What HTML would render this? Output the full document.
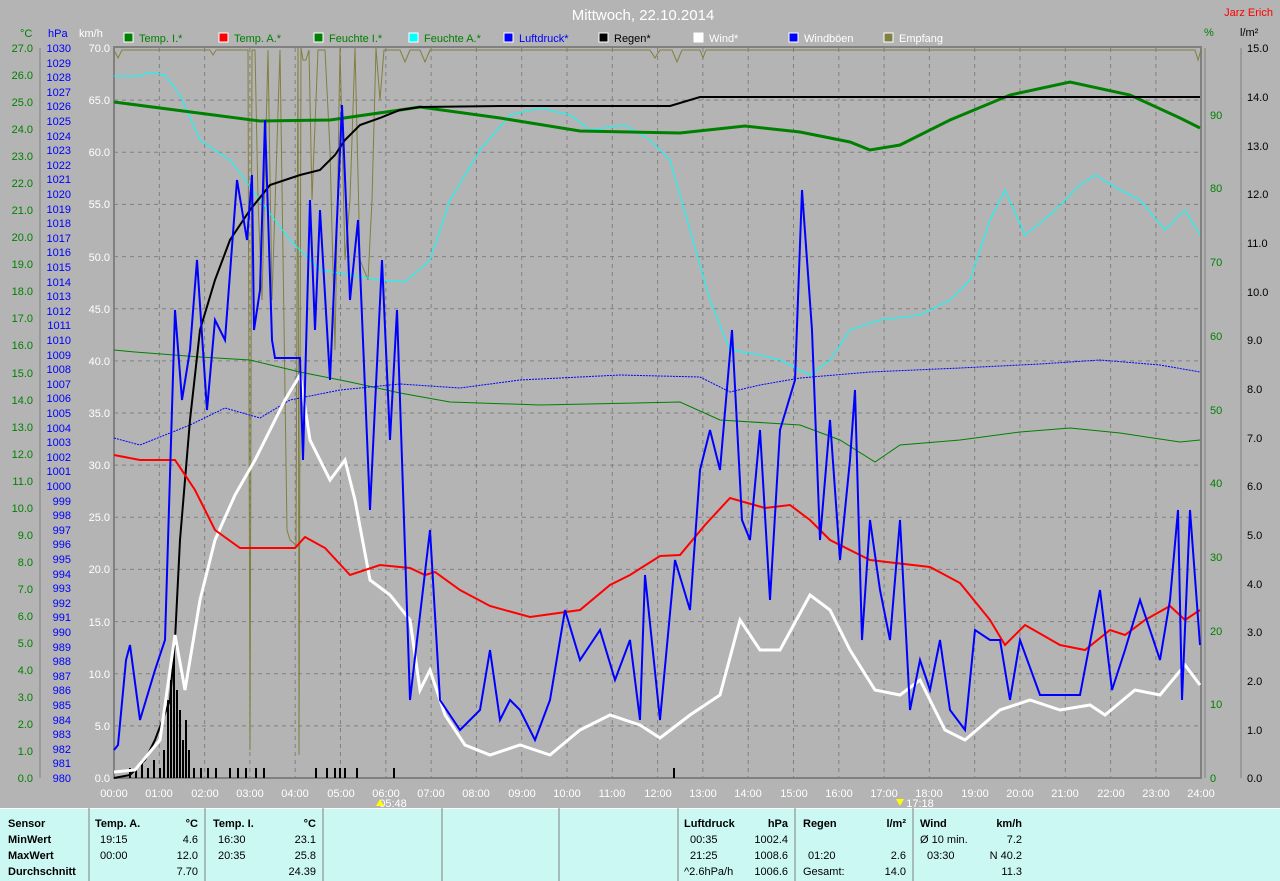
<!DOCTYPE html>
<html><head><meta charset="utf-8"><style>
html,body{margin:0;padding:0;background:#b4b4b4;}
svg{display:block;font-family:"Liberation Sans",sans-serif;}
.t{font-size:11px;}
</style></head><body>
<svg width="1280" height="881" viewBox="0 0 1280 881" xmlns="http://www.w3.org/2000/svg">
<rect width="1280" height="881" fill="#b4b4b4"/>
<text x="643" y="20" font-size="15" fill="#fff" text-anchor="middle">Mittwoch, 22.10.2014</text>
<text x="1273" y="16" font-size="11" fill="#f00" text-anchor="end">Jarz Erich</text>
<g class="t">
<rect x="124" y="33" width="9" height="9" fill="#008000" stroke="#fff"/><text x="139" y="42" fill="#008000">Temp. I.*</text>
<rect x="219" y="33" width="9" height="9" fill="#f00" stroke="#fff"/><text x="234" y="42" fill="#008000">Temp. A.*</text>
<rect x="314" y="33" width="9" height="9" fill="#008000" stroke="#fff"/><text x="329" y="42" fill="#008000">Feuchte I.*</text>
<rect x="409" y="33" width="9" height="9" fill="#0ff" stroke="#fff"/><text x="424" y="42" fill="#008000">Feuchte A.*</text>
<rect x="504" y="33" width="9" height="9" fill="#00f" stroke="#fff"/><text x="519" y="42" fill="#00f">Luftdruck*</text>
<rect x="599" y="33" width="9" height="9" fill="#000" stroke="#fff"/><text x="614" y="42" fill="#000">Regen*</text>
<rect x="694" y="33" width="9" height="9" fill="#fff" stroke="#fff"/><text x="709" y="42" fill="#fff">Wind*</text>
<rect x="789" y="33" width="9" height="9" fill="#00f" stroke="#fff"/><text x="804" y="42" fill="#fff">Windböen</text>
<rect x="884" y="33" width="9" height="9" fill="#808040" stroke="#fff"/><text x="899" y="42" fill="#fff">Empfang</text>
<text x="20" y="37" fill="#008000">°C</text><text x="48" y="37" fill="#00f">hPa</text><text x="79" y="37" fill="#fff">km/h</text>
<text x="1204" y="36" fill="#008000">%</text><text x="1240" y="36" fill="#000">l/m²</text>
</g>
<g stroke="#808080" stroke-dasharray="4,4" stroke-width="1">
<line x1="114" y1="100.1" x2="1201" y2="100.1"/><line x1="114" y1="152.3" x2="1201" y2="152.3"/><line x1="114" y1="204.4" x2="1201" y2="204.4"/><line x1="114" y1="256.6" x2="1201" y2="256.6"/><line x1="114" y1="308.7" x2="1201" y2="308.7"/><line x1="114" y1="360.9" x2="1201" y2="360.9"/><line x1="114" y1="413" x2="1201" y2="413"/><line x1="114" y1="465.1" x2="1201" y2="465.1"/><line x1="114" y1="517.3" x2="1201" y2="517.3"/><line x1="114" y1="569.4" x2="1201" y2="569.4"/><line x1="114" y1="621.6" x2="1201" y2="621.6"/><line x1="114" y1="673.7" x2="1201" y2="673.7"/><line x1="114" y1="725.9" x2="1201" y2="725.9"/>
<line x1="159.3" y1="48" x2="159.3" y2="778"/><line x1="204.6" y1="48" x2="204.6" y2="778"/><line x1="249.9" y1="48" x2="249.9" y2="778"/><line x1="295.2" y1="48" x2="295.2" y2="778"/><line x1="340.5" y1="48" x2="340.5" y2="778"/><line x1="385.8" y1="48" x2="385.8" y2="778"/><line x1="431.1" y1="48" x2="431.1" y2="778"/><line x1="476.4" y1="48" x2="476.4" y2="778"/><line x1="521.7" y1="48" x2="521.7" y2="778"/><line x1="567" y1="48" x2="567" y2="778"/><line x1="612.3" y1="48" x2="612.3" y2="778"/><line x1="657.6" y1="48" x2="657.6" y2="778"/><line x1="702.9" y1="48" x2="702.9" y2="778"/><line x1="748.2" y1="48" x2="748.2" y2="778"/><line x1="793.5" y1="48" x2="793.5" y2="778"/><line x1="838.8" y1="48" x2="838.8" y2="778"/><line x1="884.1" y1="48" x2="884.1" y2="778"/><line x1="929.4" y1="48" x2="929.4" y2="778"/><line x1="974.7" y1="48" x2="974.7" y2="778"/><line x1="1020" y1="48" x2="1020" y2="778"/><line x1="1065.3" y1="48" x2="1065.3" y2="778"/><line x1="1110.6" y1="48" x2="1110.6" y2="778"/><line x1="1155.9" y1="48" x2="1155.9" y2="778"/>
</g>
<line x1="114" y1="778" x2="1201" y2="778" stroke="#000" stroke-dasharray="1,2"/>
<rect x="114" y="47" width="1087" height="731" fill="none" stroke="#808080" stroke-width="2"/>
<g stroke="#808080"><line x1="40" y1="48" x2="40" y2="778"/><line x1="1241" y1="48" x2="1241" y2="778"/><line x1="1205" y1="48" x2="1205" y2="778"/></g>
<g class="t" fill="#008000" text-anchor="end">
<text x="33" y="52">27.0</text><text x="33" y="79">26.0</text><text x="33" y="106">25.0</text><text x="33" y="133">24.0</text><text x="33" y="160">23.0</text><text x="33" y="187">22.0</text><text x="33" y="214">21.0</text><text x="33" y="241">20.0</text><text x="33" y="268">19.0</text><text x="33" y="295">18.0</text><text x="33" y="322">17.0</text><text x="33" y="349">16.0</text><text x="33" y="377">15.0</text><text x="33" y="404">14.0</text><text x="33" y="431">13.0</text><text x="33" y="458">12.0</text><text x="33" y="485">11.0</text><text x="33" y="512">10.0</text><text x="33" y="539">9.0</text><text x="33" y="566">8.0</text><text x="33" y="593">7.0</text><text x="33" y="620">6.0</text><text x="33" y="647">5.0</text><text x="33" y="674">4.0</text><text x="33" y="701">3.0</text><text x="33" y="728">2.0</text><text x="33" y="755">1.0</text><text x="33" y="782">0.0</text>
</g>
<g class="t" fill="#00f" text-anchor="end">
<text x="71" y="52">1030</text><text x="71" y="67">1029</text><text x="71" y="81">1028</text><text x="71" y="96">1027</text><text x="71" y="110">1026</text><text x="71" y="125">1025</text><text x="71" y="140">1024</text><text x="71" y="154">1023</text><text x="71" y="169">1022</text><text x="71" y="183">1021</text><text x="71" y="198">1020</text><text x="71" y="213">1019</text><text x="71" y="227">1018</text><text x="71" y="242">1017</text><text x="71" y="256">1016</text><text x="71" y="271">1015</text><text x="71" y="286">1014</text><text x="71" y="300">1013</text><text x="71" y="315">1012</text><text x="71" y="329">1011</text><text x="71" y="344">1010</text><text x="71" y="359">1009</text><text x="71" y="373">1008</text><text x="71" y="388">1007</text><text x="71" y="402">1006</text><text x="71" y="417">1005</text><text x="71" y="432">1004</text><text x="71" y="446">1003</text><text x="71" y="461">1002</text><text x="71" y="475">1001</text><text x="71" y="490">1000</text><text x="71" y="505">999</text><text x="71" y="519">998</text><text x="71" y="534">997</text><text x="71" y="548">996</text><text x="71" y="563">995</text><text x="71" y="578">994</text><text x="71" y="592">993</text><text x="71" y="607">992</text><text x="71" y="621">991</text><text x="71" y="636">990</text><text x="71" y="651">989</text><text x="71" y="665">988</text><text x="71" y="680">987</text><text x="71" y="694">986</text><text x="71" y="709">985</text><text x="71" y="724">984</text><text x="71" y="738">983</text><text x="71" y="753">982</text><text x="71" y="767">981</text><text x="71" y="782">980</text>
</g>
<g class="t" fill="#fff" text-anchor="end">
<text x="110" y="52">70.0</text><text x="110" y="104">65.0</text><text x="110" y="156">60.0</text><text x="110" y="208">55.0</text><text x="110" y="261">50.0</text><text x="110" y="313">45.0</text><text x="110" y="365">40.0</text><text x="110" y="417">35.0</text><text x="110" y="469">30.0</text><text x="110" y="521">25.0</text><text x="110" y="573">20.0</text><text x="110" y="626">15.0</text><text x="110" y="678">10.0</text><text x="110" y="730">5.0</text><text x="110" y="782">0.0</text>
</g>
<g class="t" fill="#008000">
<text x="1210" y="119">90</text><text x="1210" y="192">80</text><text x="1210" y="266">70</text><text x="1210" y="340">60</text><text x="1210" y="414">50</text><text x="1210" y="487">40</text><text x="1210" y="561">30</text><text x="1210" y="635">20</text><text x="1210" y="708">10</text><text x="1210" y="782">0</text>
</g>
<g class="t" fill="#000">
<text x="1247" y="52">15.0</text><text x="1247" y="101">14.0</text><text x="1247" y="150">13.0</text><text x="1247" y="198">12.0</text><text x="1247" y="247">11.0</text><text x="1247" y="296">10.0</text><text x="1247" y="344">9.0</text><text x="1247" y="393">8.0</text><text x="1247" y="442">7.0</text><text x="1247" y="490">6.0</text><text x="1247" y="539">5.0</text><text x="1247" y="588">4.0</text><text x="1247" y="636">3.0</text><text x="1247" y="685">2.0</text><text x="1247" y="734">1.0</text><text x="1247" y="782">0.0</text>
</g>
<g class="t" fill="#fff" text-anchor="middle">
<text x="114" y="797">00:00</text><text x="159" y="797">01:00</text><text x="205" y="797">02:00</text><text x="250" y="797">03:00</text><text x="295" y="797">04:00</text><text x="341" y="797">05:00</text><text x="386" y="797">06:00</text><text x="431" y="797">07:00</text><text x="476" y="797">08:00</text><text x="522" y="797">09:00</text><text x="567" y="797">10:00</text><text x="612" y="797">11:00</text><text x="658" y="797">12:00</text><text x="703" y="797">13:00</text><text x="748" y="797">14:00</text><text x="794" y="797">15:00</text><text x="839" y="797">16:00</text><text x="884" y="797">17:00</text><text x="929" y="797">18:00</text><text x="975" y="797">19:00</text><text x="1020" y="797">20:00</text><text x="1065" y="797">21:00</text><text x="1111" y="797">22:00</text><text x="1156" y="797">23:00</text><text x="1201" y="797">24:00</text>
<text x="393" y="807">05:48</text><text x="920" y="807">17:18</text>
</g>
<polygon points="376,806 380,799 384,806" fill="#ff0"/><polygon points="896,799 904,799 900,806" fill="#ff0"/>
<polyline fill="none" stroke="#808040" stroke-width="1" points="114,50 118,58 122,50 210,50 213,55 216,50 248,50 250,750 252,50 255,50 258,200 262,300 268,50 272,300 280,50 287,530 290,540 296,545 298,48 299,755 301,48 303,60 306,60 309,50 312,200 318,50 325,50 330,150 335,350 340,48 345,260 350,200 355,48 360,260 368,280 372,200 376,48 380,100 384,50 400,50 405,62 410,50 420,50 425,62 430,50 650,50 655,58 660,50 672,50 677,62 682,50 700,50 703,58 706,50 1195,50 1198,60 1201,50"/>
<g stroke="#000" stroke-width="2">
<line x1="130" y1="778" x2="130" y2="768"/><line x1="136" y1="778" x2="136" y2="770"/><line x1="142" y1="778" x2="142" y2="760"/><line x1="148" y1="778" x2="148" y2="768"/><line x1="154" y1="778" x2="154" y2="760"/><line x1="160" y1="778" x2="160" y2="768"/><line x1="164" y1="778" x2="164" y2="750"/><line x1="168" y1="778" x2="168" y2="700"/><line x1="171" y1="778" x2="171" y2="680"/><line x1="174" y1="778" x2="174" y2="640"/><line x1="177" y1="778" x2="177" y2="690"/><line x1="180" y1="778" x2="180" y2="710"/><line x1="183" y1="778" x2="183" y2="740"/><line x1="186" y1="778" x2="186" y2="720"/><line x1="189" y1="778" x2="189" y2="750"/><line x1="194" y1="778" x2="194" y2="768"/><line x1="201" y1="778" x2="201" y2="768"/><line x1="208" y1="778" x2="208" y2="768"/><line x1="216" y1="778" x2="216" y2="768"/><line x1="230" y1="778" x2="230" y2="768"/><line x1="238" y1="778" x2="238" y2="768"/><line x1="246" y1="778" x2="246" y2="768"/><line x1="256" y1="778" x2="256" y2="768"/><line x1="264" y1="778" x2="264" y2="768"/><line x1="316" y1="778" x2="316" y2="768"/><line x1="327" y1="778" x2="327" y2="768"/><line x1="335" y1="778" x2="335" y2="768"/><line x1="340" y1="778" x2="340" y2="768"/><line x1="345" y1="778" x2="345" y2="768"/><line x1="357" y1="778" x2="357" y2="768"/><line x1="394" y1="778" x2="394" y2="768"/><line x1="674" y1="778" x2="674" y2="768"/>
</g>
<polyline fill="none" stroke="#008000" stroke-width="1" points="114,350 135,352 200,357 250,360 300,372 350,382 400,393 450,402 540,405 680,402 720,420 800,425 840,440 875,462 900,445 960,440 1020,432 1070,428 1120,433 1180,442 1200,440"/>
<polyline fill="none" stroke="#00f" stroke-width="1" stroke-dasharray="2,1" points="114,438 140,445 190,425 225,408 260,418 290,400 340,390 400,384 460,388 520,380 620,375 700,377 730,392 760,385 800,378 870,372 960,368 1040,364 1100,360 1160,365 1200,372"/>
<polyline fill="none" stroke="#0ff" stroke-width="1" points="114,76 140,76 148,72 165,75 180,95 200,140 230,160 260,200 290,240 320,270 380,280 405,282 430,260 450,200 480,150 510,115 540,108 570,115 590,130 625,125 650,140 670,160 690,230 710,300 730,350 760,355 780,360 810,375 830,360 850,330 880,320 920,315 950,300 970,280 990,220 1005,190 1025,235 1050,215 1080,185 1095,175 1120,190 1140,200 1165,230 1185,210 1200,235"/>
<polyline fill="none" stroke="#008000" stroke-width="3" points="114,102 160,108 260,121 330,120 400,110 420,107 500,118 580,131 680,133 745,126 800,132 850,142 870,150 900,145 950,120 1010,95 1070,82 1130,95 1180,118 1200,128"/>
<polyline fill="none" stroke="#000" stroke-width="2" points="114,778 130,775 145,760 155,740 170,700 175,640 180,540 190,420 200,330 215,280 230,240 250,210 270,185 300,175 320,170 335,155 345,140 360,125 380,118 400,110 420,107 500,106 670,106 700,97 1200,97"/>
<polyline fill="none" stroke="#fff" stroke-width="3" points="114,772 135,770 160,740 175,635 185,690 200,600 215,540 235,495 255,460 265,440 285,400 300,375 310,440 330,480 345,460 355,500 370,580 390,595 410,620 420,690 430,670 445,715 465,745 490,755 520,745 550,755 580,730 610,715 640,725 660,738 690,715 720,695 740,620 760,650 780,650 810,595 830,610 850,650 875,690 900,695 920,680 945,730 965,740 1000,710 1030,700 1060,710 1090,705 1105,715 1135,690 1160,695 1185,665 1200,685"/>
<polyline fill="none" stroke="#f00" stroke-width="2" points="114,455 140,460 175,460 195,490 215,530 240,548 295,548 305,537 325,548 350,575 380,565 410,568 425,575 435,572 460,590 490,606 530,617 580,610 610,585 630,575 660,556 680,555 705,525 730,498 765,508 790,505 810,520 830,540 870,560 930,567 960,583 990,620 1005,645 1025,625 1060,645 1085,650 1110,630 1125,635 1145,620 1170,606 1185,620 1200,610"/>
<polyline fill="none" stroke="#00f" stroke-width="2" points="114,750 118,745 126,660 130,645 140,720 155,670 165,640 175,310 182,400 190,350 197,260 207,410 215,320 225,340 237,180 247,240 252,175 254,330 260,290 265,120 272,340 275,358 300,358 303,460 310,200 315,330 320,210 330,380 342,105 350,300 358,220 370,510 382,260 390,440 397,310 410,700 430,530 440,700 460,730 480,710 490,650 500,720 510,700 520,710 535,740 550,700 565,610 580,660 600,630 615,680 630,640 640,720 645,575 660,720 675,560 690,610 700,470 710,430 720,470 732,330 742,520 750,540 760,430 770,600 780,430 795,380 802,190 812,330 820,540 830,420 840,560 850,460 855,390 862,640 870,520 880,590 890,640 900,520 910,710 920,660 930,690 940,640 950,710 965,730 975,630 990,640 1000,640 1010,700 1020,640 1040,695 1080,695 1100,590 1112,690 1125,650 1140,600 1160,660 1170,600 1178,510 1182,700 1190,510 1200,645"/>
<rect x="0" y="808" width="1280" height="73" fill="#ccf8f4"/>
<line x1="0" y1="808.5" x2="1280" y2="808.5" stroke="#fff"/>
<g stroke="#808080"><line x1="89" y1="808" x2="89" y2="881"/><line x1="205" y1="808" x2="205" y2="881"/><line x1="323" y1="808" x2="323" y2="881"/><line x1="442" y1="808" x2="442" y2="881"/><line x1="559" y1="808" x2="559" y2="881"/><line x1="678" y1="808" x2="678" y2="881"/><line x1="795" y1="808" x2="795" y2="881"/><line x1="913" y1="808" x2="913" y2="881"/></g>
<g class="t" fill="#000">
<g font-weight="bold"><text x="8" y="827">Sensor</text><text x="8" y="843">MinWert</text><text x="8" y="859">MaxWert</text><text x="8" y="875">Durchschnitt</text>
<text x="95" y="827">Temp. A.</text><text x="198" y="827" text-anchor="end">°C</text>
<text x="213" y="827">Temp. I.</text><text x="316" y="827" text-anchor="end">°C</text>
<text x="684" y="827">Luftdruck</text><text x="788" y="827" text-anchor="end">hPa</text>
<text x="803" y="827">Regen</text><text x="906" y="827" text-anchor="end">l/m²</text>
<text x="920" y="827">Wind</text><text x="1022" y="827" text-anchor="end">km/h</text></g>
<text x="100" y="843">19:15</text><text x="198" y="843" text-anchor="end">4.6</text>
<text x="100" y="859">00:00</text><text x="198" y="859" text-anchor="end">12.0</text>
<text x="198" y="875" text-anchor="end">7.70</text>
<text x="218" y="843">16:30</text><text x="316" y="843" text-anchor="end">23.1</text>
<text x="218" y="859">20:35</text><text x="316" y="859" text-anchor="end">25.8</text>
<text x="316" y="875" text-anchor="end">24.39</text>
<text x="690" y="843">00:35</text><text x="788" y="843" text-anchor="end">1002.4</text>
<text x="690" y="859">21:25</text><text x="788" y="859" text-anchor="end">1008.6</text>
<text x="684" y="875">^2.6hPa/h</text><text x="788" y="875" text-anchor="end">1006.6</text>
<text x="808" y="859">01:20</text><text x="906" y="859" text-anchor="end">2.6</text>
<text x="803" y="875">Gesamt:</text><text x="906" y="875" text-anchor="end">14.0</text>
<text x="920" y="843">Ø 10 min.</text><text x="1022" y="843" text-anchor="end">7.2</text>
<text x="927" y="859">03:30</text><text x="1022" y="859" text-anchor="end">N 40.2</text>
<text x="1022" y="875" text-anchor="end">11.3</text>
</g>
</svg>
</body></html>
